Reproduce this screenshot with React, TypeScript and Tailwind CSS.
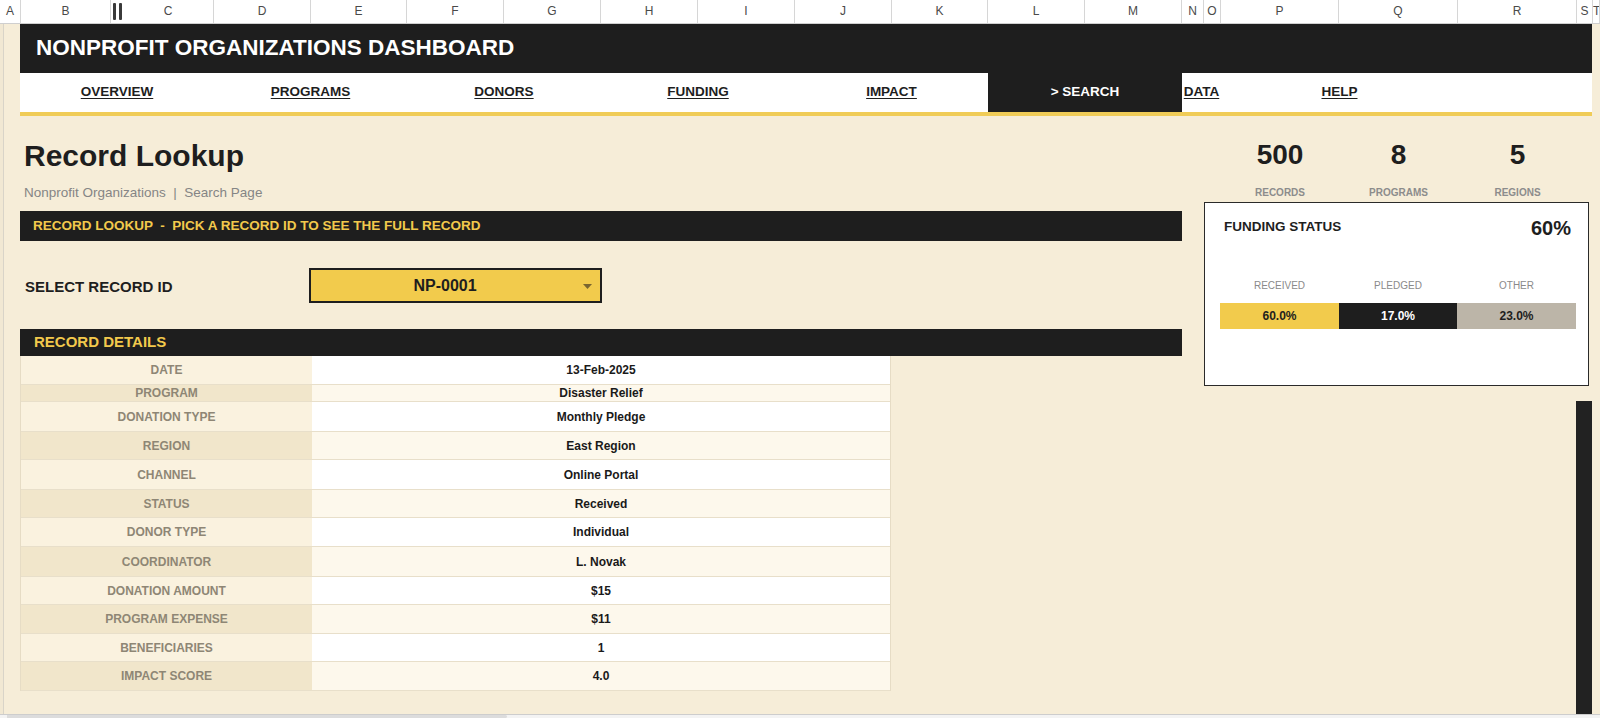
import React from "react";

type Col = { label: string; w: number };

// sheet column header widths, in px
const columns: Col[] = [
  { label: "A", w: 21 },
  { label: "B", w: 90 },
  { label: "||", w: 12 },
  { label: "C", w: 91 },
  { label: "D", w: 97 },
  { label: "E", w: 96 },
  { label: "F", w: 97 },
  { label: "G", w: 97 },
  { label: "H", w: 97 },
  { label: "I", w: 97 },
  { label: "J", w: 97 },
  { label: "K", w: 96 },
  { label: "L", w: 97 },
  { label: "M", w: 97 },
  { label: "N", w: 22 },
  { label: "O", w: 17 },
  { label: "P", w: 118 },
  { label: "Q", w: 119 },
  { label: "R", w: 119 },
  { label: "S", w: 16 },
  { label: "T", w: 7 },
];

const navItems = [
  { label: "OVERVIEW", w: "w-[194px]" },
  { label: "PROGRAMS", w: "w-[193px]" },
  { label: "DONORS", w: "w-[194px]" },
  { label: "FUNDING", w: "w-[194px]" },
  { label: "IMPACT", w: "w-[193px]" },
  { label: "> SEARCH", w: "w-[194px]", active: true },
  { label: "DATA", w: "w-[39px]" },
  { label: "HELP", w: "w-[237px]" },
  { label: "", w: "flex-1" },
];

const details = [
  { label: "DATE", value: "13-Feb-2025", h: "h-[29px]" },
  { label: "PROGRAM", value: "Disaster Relief", h: "h-[17px]" },
  { label: "DONATION TYPE", value: "Monthly Pledge", h: "h-[30px]" },
  { label: "REGION", value: "East Region", h: "h-[28px]" },
  { label: "CHANNEL", value: "Online Portal", h: "h-[30px]" },
  { label: "STATUS", value: "Received", h: "h-[28px]" },
  { label: "DONOR TYPE", value: "Individual", h: "h-[29px]" },
  { label: "COORDINATOR", value: "L. Novak", h: "h-[30px]" },
  { label: "DONATION AMOUNT", value: "$15", h: "h-[28px]" },
  { label: "PROGRAM EXPENSE", value: "$11", h: "h-[29px]" },
  { label: "BENEFICIARIES", value: "1", h: "h-[28px]" },
  { label: "IMPACT SCORE", value: "4.0", h: "h-[29px]" },
];

const kpis = [
  { value: "500", label: "RECORDS", w: "w-[118px]" },
  { value: "8", label: "PROGRAMS", w: "w-[119px]" },
  { value: "5", label: "REGIONS", w: "w-[119px]" },
];

const funding = [
  { label: "RECEIVED", value: "60.0%", w: "w-[119px]", cls: "bg-[#f2cb4c] text-[#1e1e1e]" },
  { label: "PLEDGED", value: "17.0%", w: "w-[118px]", cls: "bg-[#1e1e1e] text-white" },
  { label: "OTHER", value: "23.0%", w: "w-[119px]", cls: "bg-[#bcb5a8] text-[#1e1e1e]" },
];

const ColumnHeader = () => (
  <div className="flex h-[24px] shrink-0 bg-white border-b border-[#cfcfcf]">
    {columns.map((c) =>
      c.label === "||" ? (
        <div key="hidden" className="flex items-center justify-center gap-[3px]" style={{ width: c.w }}>
          <div className="w-[3px] h-[17px] bg-[#3a3a3a] rounded-[1px]" />
          <div className="w-[3px] h-[17px] bg-[#3a3a3a] rounded-[1px]" />
        </div>
      ) : (
        <div
          key={c.label}
          className="shrink-0 border-r border-[#d6d6d6] text-center text-[12px] leading-[23px] text-[#4a4a4a] overflow-hidden"
          style={{ width: c.w }}
        >
          {c.label}
        </div>
      )
    )}
  </div>
);

const SectionBar = ({ text, className }: { text: string; className: string }) => (
  <div className={`bg-[#1e1e1e] flex items-center text-[#f2c94c] font-bold ${className}`}>{text}</div>
);

export default function App() {
  return (
    <div
      className="w-[1600px] h-[718px] overflow-hidden flex flex-col bg-[#f6edd8] text-[#1e1e1e]"
      style={{ fontFamily: '"Liberation Sans", Arial, sans-serif' }}
    >
      <ColumnHeader />

      <div className="flex flex-1 min-h-0">
        {/* column A, row headers are hidden */}
        <div className="w-[20px] shrink-0 border-l-[3px] border-[#f1e8d3]">
          <div className="h-full w-px bg-[#d9d4c8]" />
        </div>

        <div className="w-[1572px] shrink-0 flex flex-col">
          <div className="h-[49px] shrink-0 bg-[#1e1e1e] flex items-center pl-[16px]">
            <h1 className="text-white font-bold text-[22.5px] leading-none">NONPROFIT ORGANIZATIONS DASHBOARD</h1>
          </div>

          <nav className="h-[39px] shrink-0 flex bg-white">
            {navItems.map((n, i) => (
              <div
                key={i}
                className={`${n.w} shrink-0 flex items-center justify-center text-[13.5px] font-bold ${
                  n.active ? "bg-[#1e1e1e] text-white" : "text-[#1e1e1e] underline underline-offset-2"
                }`}
              >
                {n.label}
              </div>
            ))}
          </nav>
          <div className="h-[4px] shrink-0 bg-[#f0cc57]" />

          <div className="flex flex-1 min-h-0">
            {/* left: lookup + details */}
            <div className="w-[1162px] shrink-0 flex flex-col">
              <h2 className="mt-[22px] pl-[4px] text-[30px] leading-[36px] font-bold">Record Lookup</h2>
              <p className="mt-[11px] pl-[4px] text-[13.5px] leading-[16px] text-[#858585]">
                Nonprofit Organizations&nbsp;&nbsp;|&nbsp;&nbsp;Search Page
              </p>

              <SectionBar
                text="RECORD LOOKUP  -  PICK A RECORD ID TO SEE THE FULL RECORD"
                className="mt-[10px] h-[30px] pl-[13px] text-[13.5px] whitespace-pre"
              />

              <div className="mt-[27px] flex items-center">
                <div className="w-[289px] pl-[5px] pt-[3px] text-[15px] font-bold">SELECT RECORD ID</div>
                <div className="relative w-[293px] h-[35px] pr-[21px] bg-[#f2cb4c] border-2 border-[#1e1e1e] flex items-center justify-center">
                  <span className="text-[16px] font-bold">NP-0001</span>
                  <svg className="absolute right-[8px] top-[14px]" width="9" height="5" viewBox="0 0 9 5">
                    <path d="M0 0h9L4.5 5z" fill="#7a6630" />
                  </svg>
                </div>
              </div>

              <SectionBar text="RECORD DETAILS" className="mt-[26px] h-[27px] pl-[14px] text-[15px]" />

              <div className="w-[871px] border-l border-r border-[#e6dcc5]">
                {details.map((d, i) => {
                  const odd = i % 2 === 1;
                  return (
                    <div key={d.label} className={`${d.h} flex border-b border-[#e8dfca]`}>
                      <div
                        className={`w-[291px] shrink-0 flex items-center justify-center text-[12px] font-bold text-[#8e8675] ${
                          odd ? "bg-[#f1e6cb]" : "bg-[#faf2df]"
                        }`}
                      >
                        {d.label}
                      </div>
                      <div
                        className={`flex-1 flex items-center justify-center text-[12px] font-bold text-[#1a1a1a] ${
                          odd ? "bg-[#fdf8ec]" : "bg-white"
                        }`}
                      >
                        {d.value}
                      </div>
                    </div>
                  );
                })}
              </div>
            </div>

            <div className="w-[22px] shrink-0" />

            {/* right: kpis + funding status */}
            <div className="w-[388px] shrink-0 flex flex-col">
              <div className="mt-[23px] pl-[17px] flex">
                {kpis.map((k) => (
                  <div key={k.label} className={`${k.w} flex flex-col items-center`}>
                    <div className="text-[28px] leading-[32px] font-bold">{k.value}</div>
                    <div className="mt-[16px] text-[10px] leading-[12px] font-bold text-[#8c8c8c]">{k.label}</div>
                  </div>
                ))}
              </div>

              <div className="mt-[3px] w-[385px] h-[184px] shrink-0 bg-white border border-[#2a2a2a] flex flex-col">
                <div className="pt-[13px] pl-[19px] pr-[17px] flex justify-between items-start">
                  <span className="mt-[3px] text-[13.5px] leading-[16px] font-bold">FUNDING STATUS</span>
                  <span className="text-[20px] leading-[24px] font-bold">60%</span>
                </div>
                <div className="mt-[40px] pl-[15px] flex">
                  {funding.map((f) => (
                    <div key={f.label} className={`${f.w} text-center text-[10px] leading-[12px] text-[#8a8a8a]`}>
                      {f.label}
                    </div>
                  ))}
                </div>
                <div className="mt-[11px] pl-[15px] flex">
                  {funding.map((f) => (
                    <div
                      key={f.label}
                      className={`${f.w} ${f.cls} h-[26px] flex items-center justify-center text-[12px] font-bold`}
                    >
                      {f.value}
                    </div>
                  ))}
                </div>
              </div>

              <div className="mt-[15px] flex-1 self-end w-[16px] bg-[#222222]" />
            </div>
          </div>
        </div>

        <div className="flex-1" />
      </div>

      {/* horizontal scroll strip */}
      <div className="h-[4px] shrink-0 border-t border-[#cdcdcd] bg-[#f3f3f3] flex">
        <div className="ml-[7px] w-[500px] h-[3px] rounded-r-[2px] bg-[#dcdcdc]" />
      </div>
    </div>
  );
}
